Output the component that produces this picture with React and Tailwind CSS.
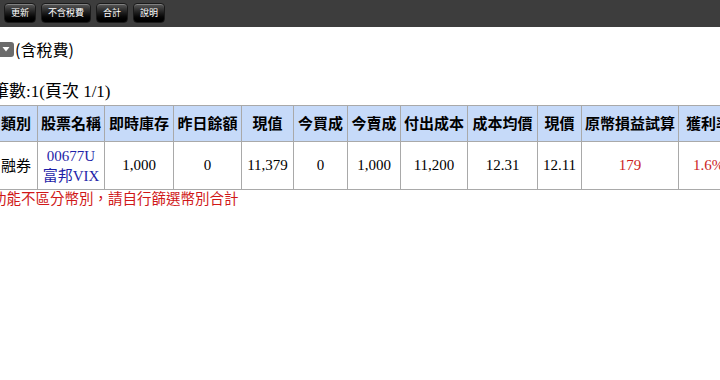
const COLS = [
  { label: "類別", w: 43 },
  { label: "股票名稱", w: 67 },
  { label: "即時庫存", w: 69 },
  { label: "昨日餘額", w: 68 },
  { label: "現值", w: 52 },
  { label: "今買成", w: 54 },
  { label: "今賣成", w: 53 },
  { label: "付出成本", w: 67 },
  { label: "成本均價", w: 70 },
  { label: "現價", w: 44 },
  { label: "原幣損益試算", w: 97 },
  { label: "獲利率", w: 60 },
  { label: "幣別", w: 44 },
];

const BTNS = ["更新", "不含稅費", "合計", "說明"];

const CJK = { fontFamily: '"Noto Sans CJK TC", sans-serif' };

export default function App() {
  return (
    <div
      className="w-[720px] h-[380px] overflow-hidden bg-white text-black"
      style={{ fontFamily: '"Liberation Serif", "Noto Sans CJK TC", serif' }}
    >
      <div className="flex h-[27px] items-start gap-[5px] bg-[#3d3d3d] pl-[4px] pt-[3px]">
        {BTNS.map((b) => (
          <button
            key={b}
            type="button"
            className="h-[20px] rounded-[4px] border border-[#1a1a1a] bg-gradient-to-b from-[#5a5a5a] via-[#1c1c1c] to-black px-[6px] text-[9px] leading-[18px] text-white shadow-[inset_0_1px_0_rgba(255,255,255,0.25)]"
            style={CJK}
          >
            {b}
          </button>
        ))}
      </div>

      <div className="-ml-[8px]">
        <div className="mt-[13px] flex items-center gap-[1px] text-[16px] leading-[18px]">
          <span className="ml-[6px] flex h-[15px] w-[16px] items-center justify-center rounded-[3px] bg-[#6b6b6b]">
            <svg width="8" height="6" viewBox="0 0 8 6">
              <path d="M0.5 1 L7.5 1 L4 5.5 Z" fill="#fff" />
            </svg>
          </span>
          <span style={CJK}>(含稅費)</span>
        </div>

        <div className="mt-[24px] text-[17px] leading-[20px]">筆數:1(頁次 1/1)</div>

        <table className="mt-[3px] ml-[2px] w-[788px] table-fixed border-collapse text-[15px]">
          <colgroup>
            {COLS.map((c) => (
              <col key={c.label} style={{ width: c.w }} />
            ))}
          </colgroup>
          <thead>
            <tr className="h-[36px] bg-[#c6daf9]">
              {COLS.map((c) => (
                <th
                  key={c.label}
                  className="overflow-hidden border border-[#a9a9a9] px-0 text-[15px] font-semibold whitespace-nowrap"
                  style={CJK}
                >
                  {c.label}
                </th>
              ))}
            </tr>
          </thead>
          <tbody>
            <tr className="h-[48px] text-center">
              <td className="border border-[#a9a9a9]" style={CJK}>
                融券
              </td>
              <td className="border border-[#a9a9a9] leading-[20px] text-[#1e1ea8]">
                00677U
                <br />
                富邦VIX
              </td>
              <td className="border border-[#a9a9a9]">1,000</td>
              <td className="border border-[#a9a9a9]">0</td>
              <td className="border border-[#a9a9a9]">11,379</td>
              <td className="border border-[#a9a9a9]">0</td>
              <td className="border border-[#a9a9a9]">1,000</td>
              <td className="border border-[#a9a9a9]">11,200</td>
              <td className="border border-[#a9a9a9]">12.31</td>
              <td className="border border-[#a9a9a9]">12.11</td>
              <td className="border border-[#a9a9a9] text-[#cc1f1f]">179</td>
              <td className="border border-[#a9a9a9] text-[#cc1f1f]">1.6%</td>
              <td className="border border-[#a9a9a9]" style={CJK}>
                台幣
              </td>
            </tr>
          </tbody>
        </table>

        <div className="-mt-[1px] text-[14.5px] leading-[18px] text-[#d01818]" style={CJK}>
          功能不區分幣別，請自行篩選幣別合計
        </div>
      </div>
    </div>
  );
}
